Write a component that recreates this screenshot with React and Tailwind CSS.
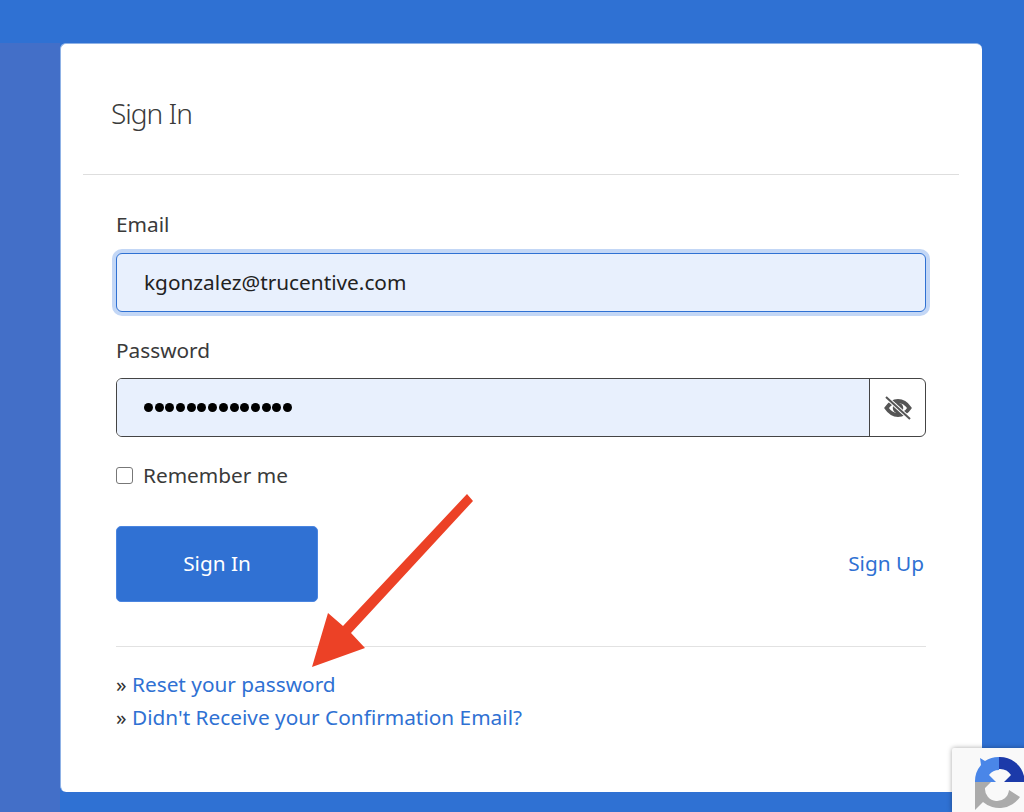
import React from 'react';

const font = { fontFamily: '"Noto Sans", sans-serif' };

function EyeSlash() {
  return (
    <svg width="28" height="24" viewBox="0 0 28 24" fill="none">
      <path d="M2.500 12C5.500 7.500 9 5 14 5s8.500 2.500 11.500 7c-3 4.500-6.500 7-11.500 7S5.500 16.500 2.500 12Z" stroke="#555" strokeWidth="4" />
      <circle cx="14" cy="12" r="3.500" stroke="#555" strokeWidth="3.500" />
      <path d="M2.500 1.500 25.500 22.500" stroke="#fff" strokeWidth="4" />
      <path d="M2 1 26 23" stroke="#555" strokeWidth="2" />
    </svg>
  );
}

function RecaptchaBadge() {
  return (
    <div className="absolute left-[952px] top-[748px] w-[256px] h-[64px] bg-[#f9f9f9] rounded-tl-[2px] shadow-[0_0_5px_rgba(0,0,0,0.35)] overflow-hidden">
      <svg width="72" height="64" viewBox="0 0 72 64" className="block">
        <path d="M28 10 L33 13 A25 25 0 0 1 47 9 L47 22 A13 13 0 0 0 37 27 L44 34 L23 34 A25 25 0 0 1 29 17 Z" fill="#4a86e8" />
        <path d="M47 9 A25 25 0 0 1 72 28 L72 34 L52 34 L59 27 A13 13 0 0 0 47 21 Z" fill="#1c3aa9" />
        <path d="M23 34 L39 34 L33 40 A12 12 0 0 0 57 42 L68 49 A25 25 0 0 1 31 54 L23 62 Z" fill="#ababab" />
      </svg>
    </div>
  );
}

export default function App() {
  return (
    <div className="relative h-[812px] w-[1024px] overflow-hidden bg-[#2f71d3] text-[#3a3a3a]" style={font}>
      <div className="h-[43px]" />
      <div className="flex h-[769px]">
        <div className="w-[60px] bg-[#436fc8]" />
        <div className="w-[922px] h-[749px] bg-white rounded-[6px] border-l border-t border-[#8fb2e6]">
          <div className="ml-[22px] mr-[23px] h-[131px] border-b border-[#dedede] pl-[28px] pt-[48px]">
            <h1 className="text-[28px] leading-[42px] tracking-[-1px] font-light">Sign In</h1>
          </div>
          <form className="ml-[55px] w-[810px] pt-[35px]">
            <label className="block text-[20.800px] leading-[28px]">Email</label>
            <div className="mt-[15px] flex h-[59px] items-center rounded-[6px] border border-[#2f71d3] bg-[#e8f0fd] pl-[27px] text-[20.800px] text-[#222] ring-4 ring-[#c3d7f6]">
              kgonzalez@trucentive.com
            </div>
            <label className="mt-[24px] block text-[20.800px] leading-[28px]">Password</label>
            <div className="mt-[14px] flex h-[59px] rounded-[6px] border border-[#444]">
              <div className="flex flex-1 items-center gap-[1.700px] rounded-l-[5px] bg-[#e8f0fd] pl-[27px]">
                {Array.from({ length: 14 }).map((_, i) => (
                  <span key={i} className="h-[9px] w-[9px] rounded-full bg-black" />
                ))}
              </div>
              <div className="flex w-[56px] items-center justify-center border-l border-[#444]">
                <EyeSlash />
              </div>
            </div>
            <div className="mt-[24px] flex items-center gap-[10px] text-[20.800px] leading-[28px]">
              <span className="h-[17px] w-[17px] rounded-[3px] border border-[#777] bg-white" />
              Remember me
            </div>
            <div className="mt-[37px] flex items-center justify-between">
              <button type="button" className="h-[76px] w-[202px] rounded-[5px] border border-[#4a85e0] bg-[#3071d3] text-[20.800px] text-white">
                Sign In
              </button>
              <a className="mr-[2px] text-[20.800px] text-[#2f71d3]">Sign Up</a>
            </div>
            <div className="mt-[44px] border-t border-[#e2e2e2] pt-[21px] text-[20.800px] leading-[33px]">
              <div><span className="text-[#333]">»</span> <a className="text-[#2f71d3]">Reset your password</a></div>
              <div><span className="text-[#333]">»</span> <a className="text-[#2f71d3]">Didn't Receive your Confirmation Email?</a></div>
            </div>
          </form>
        </div>
      </div>
      <svg className="absolute left-[312px] top-[493px]" width="164" height="176" viewBox="0 0 164 176">
        <path d="M155 1 161 8 39 140 53 155 0 174 16 120 31 133Z" fill="#ec4126" />
      </svg>
      <RecaptchaBadge />
    </div>
  );
}
